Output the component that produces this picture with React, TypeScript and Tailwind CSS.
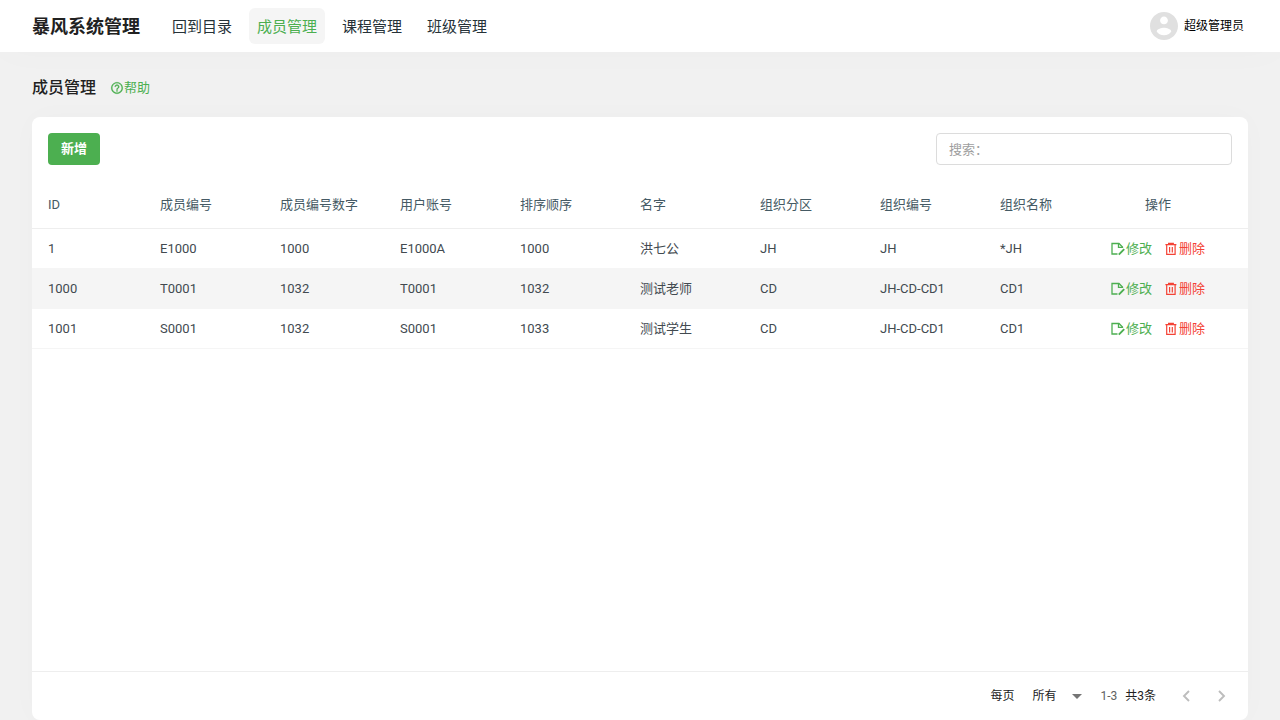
import React, { useState } from 'react';

interface Member {
  id: number;
  code: string;
  codeNumber: number;
  account: string;
  order: number;
  name: string;
  zone: string;
  orgCode: string;
  orgName: string;
}

const navItems = ['回到目录', '成员管理', '课程管理', '班级管理'];

const columns = ['ID', '成员编号', '成员编号数字', '用户账号', '排序顺序', '名字', '组织分区', '组织编号', '组织名称'];

const members: Member[] = [
  { id: 1, code: 'E1000', codeNumber: 1000, account: 'E1000A', order: 1000, name: '洪七公', zone: 'JH', orgCode: 'JH', orgName: '*JH' },
  { id: 1000, code: 'T0001', codeNumber: 1032, account: 'T0001', order: 1032, name: '测试老师', zone: 'CD', orgCode: 'JH-CD-CD1', orgName: 'CD1' },
  { id: 1001, code: 'S0001', codeNumber: 1032, account: 'S0001', order: 1033, name: '测试学生', zone: 'CD', orgCode: 'JH-CD-CD1', orgName: 'CD1' },
];

const HelpIcon = () => (
  <svg viewBox="0 0 24 24" className="size-[14px]" fill="currentColor" stroke="currentColor" strokeWidth="0.4" aria-hidden="true">
    <path d="M11 18h2v-2h-2v2zm1-16C6.480 2 2 6.480 2 12s4.480 10 10 10 10-4.480 10-10S17.520 2 12 2zm0 18c-4.410 0-8-3.590-8-8s3.590-8 8-8 8 3.590 8 8-3.590 8-8 8zm0-14c-2.210 0-4 1.790-4 4h2c0-1.100.9-2 2-2s2 .9 2 2c0 2-3 1.750-3 5h2c0-2.250 3-2.500 3-5 0-2.210-1.790-4-4-4z" />
  </svg>
);

const EditIcon = () => (
  <svg viewBox="0 0 14 14" className="size-[14px]" fill="none" stroke="currentColor" strokeWidth="1.3" aria-hidden="true">
    <path d="M6.5 12H1V1.500H8L11.500 5V6" />
    <path d="M7.500 1.500V5.400H11.500" />
    <path d="M7.800 12.600L13.200 7.200" strokeWidth="1.9" />
  </svg>
);

const TrashIcon = () => (
  <svg viewBox="0 0 14 14" className="size-[14px]" fill="none" stroke="currentColor" strokeWidth="1.2" aria-hidden="true">
    <path d="M1.400 2.600H12.400M4.600 2.300V1.400H9.300V2.300" />
    <path d="M2.700 3V12.400H11.100V3" />
    <path d="M5.600 5V10.400M8.300 5V10.400" />
  </svg>
);

const AvatarIcon = () => (
  <svg viewBox="2 2 20 20" className="size-7 text-[#e0e0e0]" fill="currentColor" aria-hidden="true">
    <path d="M12 2C6.480 2 2 6.480 2 12s4.480 10 10 10 10-4.480 10-10S17.520 2 12 2zm0 3.200c1.550 0 2.800 1.250 2.800 2.800s-1.250 2.800-2.800 2.800S9.200 9.550 9.200 8 10.450 5.200 12 5.200zm0 13.400c-2.300 0-4.300-1.100-5.200-2.700.1-1.700 3.500-2.600 5.200-2.600s5.100.9 5.200 2.600c-.9 1.600-2.900 2.700-5.200 2.700z" />
  </svg>
);

const App: React.FC = () => {
  const [active, setActive] = useState('成员管理');
  const [query, setQuery] = useState('');

  const rows = members.filter((m) => Object.values(m).join(' ').includes(query));

  return (
    <div className="flex min-h-screen flex-col bg-[#f1f1f1] font-[Roboto,'Noto_Sans_CJK_SC',sans-serif] text-[13px] text-[#212121]">
      <header className="flex h-[52px] items-center bg-white pl-8 pr-9 shadow-[0_0_40px_rgba(0,0,0,0.02)]">
        <div className="mr-6 pt-[2px] text-lg font-bold">暴风系统管理</div>
        <nav className="flex gap-[9px]">
          {navItems.map((item) => (
            <a
              key={item}
              href="#"
              onClick={() => setActive(item)}
              className={`flex h-9 items-center rounded-md px-2 pt-[2px] text-[15px] ${item === active ? 'bg-[#f5f5f5] text-[#4caf50]' : 'text-[#263238]'}`}
            >
              {item}
            </a>
          ))}
        </nav>
        <button type="button" className="ml-auto flex items-center gap-[6px] text-xs text-black">
          <AvatarIcon />
          超级管理员
        </button>
      </header>

      <main className="flex flex-1 flex-col px-8">
        <div className="flex h-[65px] items-center gap-[14px] pt-[6px]">
          <h1 className="text-base font-medium">成员管理</h1>
          <a href="#" className="flex items-center text-[#4caf50]">
            <HelpIcon />
            帮助
          </a>
        </div>

        <section className="flex flex-1 flex-col rounded-lg bg-white shadow-[0_0_30px_rgba(0,0,0,0.02)]">
          <div className="flex items-center justify-between p-4">
            <button type="button" className="h-8 rounded bg-[#4caf50] px-[13px] font-bold text-white">新增</button>
            <input
              type="search"
              aria-label="搜索"
              placeholder="搜索："
              value={query}
              onChange={(e) => setQuery(e.target.value)}
              className="h-8 w-[296px] rounded border border-[#dcdcdc] px-3 outline-none placeholder:text-[#9e9e9e]"
            />
          </div>

          <table className="w-full table-fixed border-separate border-spacing-0 text-left text-[#455a64]">
            <thead>
              <tr className="h-12 *:border-b *:border-[#eeeeee]">
                {columns.map((title) => (
                  <th key={title} className="whitespace-nowrap p-0 pl-4 font-normal first:w-28">{title}</th>
                ))}
                <th className="w-36 p-0 pr-9 text-center font-normal">操作</th>
              </tr>
            </thead>
            <tbody className="text-[#424a50]">
              {rows.map((m) => (
                <tr key={m.id} className="h-10 *:border-b *:border-[#f5f5f5] even:bg-[#f5f5f5]">
                  <td className="pl-4">{m.id}</td>
                  <td className="pl-4">{m.code}</td>
                  <td className="pl-4">{m.codeNumber}</td>
                  <td className="pl-4">{m.account}</td>
                  <td className="pl-4">{m.order}</td>
                  <td className="pl-4">{m.name}</td>
                  <td className="pl-4">{m.zone}</td>
                  <td className="pl-4">{m.orgCode}</td>
                  <td className="pl-4">{m.orgName}</td>
                  <td className="pr-9">
                    <div className="flex justify-center gap-3">
                      <button type="button" className="flex items-center gap-px text-[#4caf50]">
                        <EditIcon />
                        修改
                      </button>
                      <button type="button" className="flex items-center gap-px text-[#f44336]">
                        <TrashIcon />
                        删除
                      </button>
                    </div>
                  </td>
                </tr>
              ))}
            </tbody>
          </table>

          <footer className="mt-auto flex h-[49px] items-center justify-end border-t border-[#eeeeee] pr-4 text-xs">
            <label htmlFor="page-size">每页</label>
            <div className="relative ml-4 flex items-center">
              <select id="page-size" className="h-8 w-[52px] appearance-none bg-transparent pl-[2px] outline-none">
                <option>所有</option>
                <option>10</option>
                <option>20</option>
              </select>
              <svg viewBox="0 0 10 5" className="pointer-events-none absolute right-0 h-[5px] w-[10px] text-[#757575]" fill="currentColor" aria-hidden="true">
                <path d="M0 0h10L5 5z" />
              </svg>
            </div>
            <div className="ml-[18px] flex gap-2">
              <span className="text-[#616161]">1-3</span>
              <span>共3条</span>
            </div>
            <div className="ml-5 flex gap-4 text-[#bdbdbd]">
              <button type="button" aria-label="上一页" className="flex size-5 items-center justify-center">
                <svg viewBox="0 0 8 12" className="h-3 w-2" fill="none" stroke="currentColor" strokeWidth="1.9" aria-hidden="true">
                  <path d="M7 1L2 6l5 5" />
                </svg>
              </button>
              <button type="button" aria-label="下一页" className="flex size-5 items-center justify-center">
                <svg viewBox="0 0 8 12" className="h-3 w-2" fill="none" stroke="currentColor" strokeWidth="1.9" aria-hidden="true">
                  <path d="M1 1l5 5-5 5" />
                </svg>
              </button>
            </div>
          </footer>
        </section>
      </main>
    </div>
  );
};

export default App;
